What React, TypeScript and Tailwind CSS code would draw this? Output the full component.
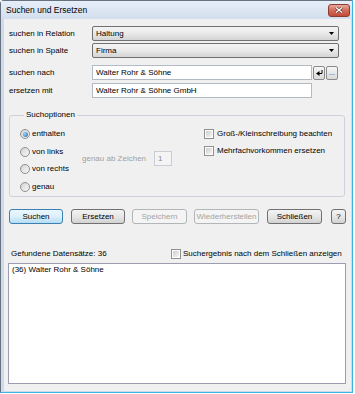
const Select = ({ value }: { value: string }) => {
  return (
    <div className="w-[247px] h-[15px] flex items-center rounded-[2px] border border-[#707070] bg-linear-to-b from-[#f4f4f4] via-[#e9e9e9] to-[#d4d4d4] pl-[3px] pr-[4px]">
      <span className="flex-1 leading-none">{value}</span>
      <svg width="5" height="3" viewBox="0 0 5 3">
        <path d="M0 0h5L2.5 3z" fill="#000" />
      </svg>
    </div>
  );
};

const Radio = ({ checked }: { checked?: boolean }) => {
  return (
    <span className="w-[10px] h-[10px] rounded-full border border-[#8e8f8f] bg-linear-to-br from-[#d2d2d2] to-[#fafafa] flex items-center justify-center shrink-0">
      {checked && <span className="w-[5px] h-[5px] rounded-full bg-[radial-gradient(circle_at_35%_35%,#9fd4ff,#1b63a8)]"></span>}
    </span>
  );
};

const Check = () => {
  return (
    <span className="w-[10px] h-[10px] border border-[#8e8f8f] bg-white p-[1px] shrink-0">
      <span className="block w-full h-full bg-linear-to-br from-[#cdcdcd] to-[#f5f5f5]"></span>
    </span>
  );
};

const btnNormal =
  "h-[15px] flex items-center justify-center rounded-[3px] border border-[#707070] bg-linear-to-b from-[#f3f3f3] via-[#e6e6e6] to-[#d2d2d2] leading-none";
const btnDisabled =
  "h-[15px] flex items-center justify-center rounded-[3px] border border-[#b2b6b9] bg-[#f4f4f4] text-[#a3a3a3] leading-none";
const btnDefault =
  "h-[15px] flex items-center justify-center rounded-[3px] border border-[#3c7fb1] bg-linear-to-b from-[#ecf7fd] via-[#dcf0fc] to-[#b4dcf4] leading-none";

const App = () => {
  return (
    <div className="w-[355px] h-[394px] bg-white font-['Liberation_Sans',Arial,sans-serif] text-[8px] text-black">
      <div className="w-[353px] h-[393px] flex flex-col rounded-tl-[4px] border border-l-[#66727f] border-t-[#66727f] border-r-[#3ab5e6] border-b-[#3ab5e6] bg-[#cfdbe9]">
        {/* title bar */}
        <div className="h-[18px] flex items-center pl-[5px] bg-linear-to-b from-[#e6eef8] to-[#d3dfee] shrink-0">
          <span className="text-[8.5px] leading-none">Suchen und Ersetzen</span>
          <div className="ml-auto mr-[2px] w-[22px] h-[13px] rounded-[3px] border border-[#8c3b2f] bg-linear-to-b from-[#e7a99c] via-[#d16a58] to-[#c24a39] flex items-center justify-center">
            <svg width="8" height="6" viewBox="0 0 8 6">
              <path d="M1 0.5L7 5.5M7 0.5L1 5.5" stroke="#5a1f16" strokeWidth="2.4" />
              <path d="M1 0.5L7 5.5M7 0.5L1 5.5" stroke="#fff" strokeWidth="1.4" />
            </svg>
          </div>
        </div>

        {/* body frame */}
        <div className="flex-1 flex pl-[3px] pr-[1px] pb-[1px]">
          <div className="flex-1 flex flex-col bg-[#f0f0f0] pl-[5px]">
            <div className="flex items-center mt-[7px]">
              <span className="w-[83px]">suchen in Relation</span>
              <Select value="Haltung" />
            </div>
            <div className="flex items-center mt-[2px]">
              <span className="w-[83px]">suchen in Spalte</span>
              <Select value="Firma" />
            </div>

            <div className="flex items-center mt-[7px]">
              <span className="w-[83px]">suchen nach</span>
              <div className="w-[220px] h-[15px] flex items-center border border-[#b4bac3] bg-white pl-[3px] leading-none">
                Walter Rohr &amp; Söhne
              </div>
              <div className="ml-[1px] w-[12px] h-[14px] rounded-[2px] border border-[#8a8a8a] bg-linear-to-b from-[#f6f6f6] to-[#dadada] flex items-center justify-center">
                <svg width="7" height="6" viewBox="0 0 7 6">
                  <path d="M6 0v3.5H3" stroke="#000" strokeWidth="1" fill="none" />
                  <path d="M0 3.5L3.5 1v5z" fill="#000" />
                </svg>
              </div>
              <div className="ml-[1px] w-[12px] h-[14px] rounded-[2px] border border-[#8a8a8a] bg-linear-to-b from-[#f6f6f6] to-[#dadada] flex items-end justify-center pb-[3px] text-[7px] leading-none text-[#333]">
                ...
              </div>
            </div>
            <div className="flex items-center mt-[3px]">
              <span className="w-[83px]">ersetzen mit</span>
              <div className="w-[220px] h-[15px] flex items-center border border-[#b4bac3] bg-white pl-[3px] leading-none">
                Walter Rohr &amp; Söhne GmbH
              </div>
            </div>

            {/* options group */}
            <fieldset className="mt-[12px] w-[336px] h-[87px] border border-[#cdd3d9] rounded-[3px] pl-[10px]">
              <legend className="ml-[4px] px-[2px] leading-[10px]">Suchoptionen</legend>
              <div className="flex pt-[8px]">
                <div className="w-[62px] flex flex-col gap-[5.6px]">
                  <div className="h-[12px] flex items-center gap-[2px]">
                    <Radio checked />
                    <span>enthalten</span>
                  </div>
                  <div className="h-[12px] flex items-center gap-[2px]">
                    <Radio />
                    <span>von links</span>
                  </div>
                  <div className="h-[12px] flex items-center gap-[2px]">
                    <Radio />
                    <span>von rechts</span>
                  </div>
                  <div className="h-[12px] flex items-center gap-[2px]">
                    <Radio />
                    <span>genau</span>
                  </div>
                </div>
                <div className="flex items-center mt-[23px] h-[15px] self-start">
                  <span className="w-[72px] text-[#a0a0a0]">genau ab Zeichen</span>
                  <div className="w-[18px] h-[15px] border border-[#c9ced4] bg-[#f4f4f4] pl-[3px] flex items-center text-[#8a8a8a] leading-none">
                    1
                  </div>
                </div>
                <div className="ml-[32px] flex flex-col gap-[4.5px]">
                  <div className="h-[12px] flex items-center gap-[3px]">
                    <Check />
                    <span>Groß-/Kleinschreibung beachten</span>
                  </div>
                  <div className="h-[12px] flex items-center gap-[3px]">
                    <Check />
                    <span>Mehrfachvorkommen ersetzen</span>
                  </div>
                </div>
              </div>
            </fieldset>

            {/* buttons */}
            <div className="flex mt-[12px]">
              <div className={`${btnDefault} w-[54px]`}>Suchen</div>
              <div className={`${btnNormal} w-[54px] ml-[8px]`}>Ersetzen</div>
              <div className={`${btnDisabled} w-[55px] ml-[7px]`}>Speichern</div>
              <div className={`${btnDisabled} w-[65px] ml-[7px]`}>Wiederherstellen</div>
              <div className={`${btnNormal} w-[55px] ml-[8px]`}>Schließen</div>
              <div className={`${btnNormal} w-[15px] ml-[9px]`}>?</div>
            </div>

            {/* results */}
            <div className="flex items-center h-[12px] mt-[24px]">
              <span className="w-[160px] ml-[2px]">Gefundene Datensätze: 36</span>
              <Check />
              <span className="ml-[2px]">Suchergebnis nach dem Schließen anzeigen</span>
            </div>
            <div className="mt-[3px] ml-[-1px] w-[338px] h-[121px] border border-[#9d9cb0] bg-white pl-[3px] pt-[1px]">
              <div className="leading-[10px]">(36) Walter Rohr &amp; Söhne</div>
            </div>
          </div>
        </div>
      </div>
    </div>
  );
};

export default App;
